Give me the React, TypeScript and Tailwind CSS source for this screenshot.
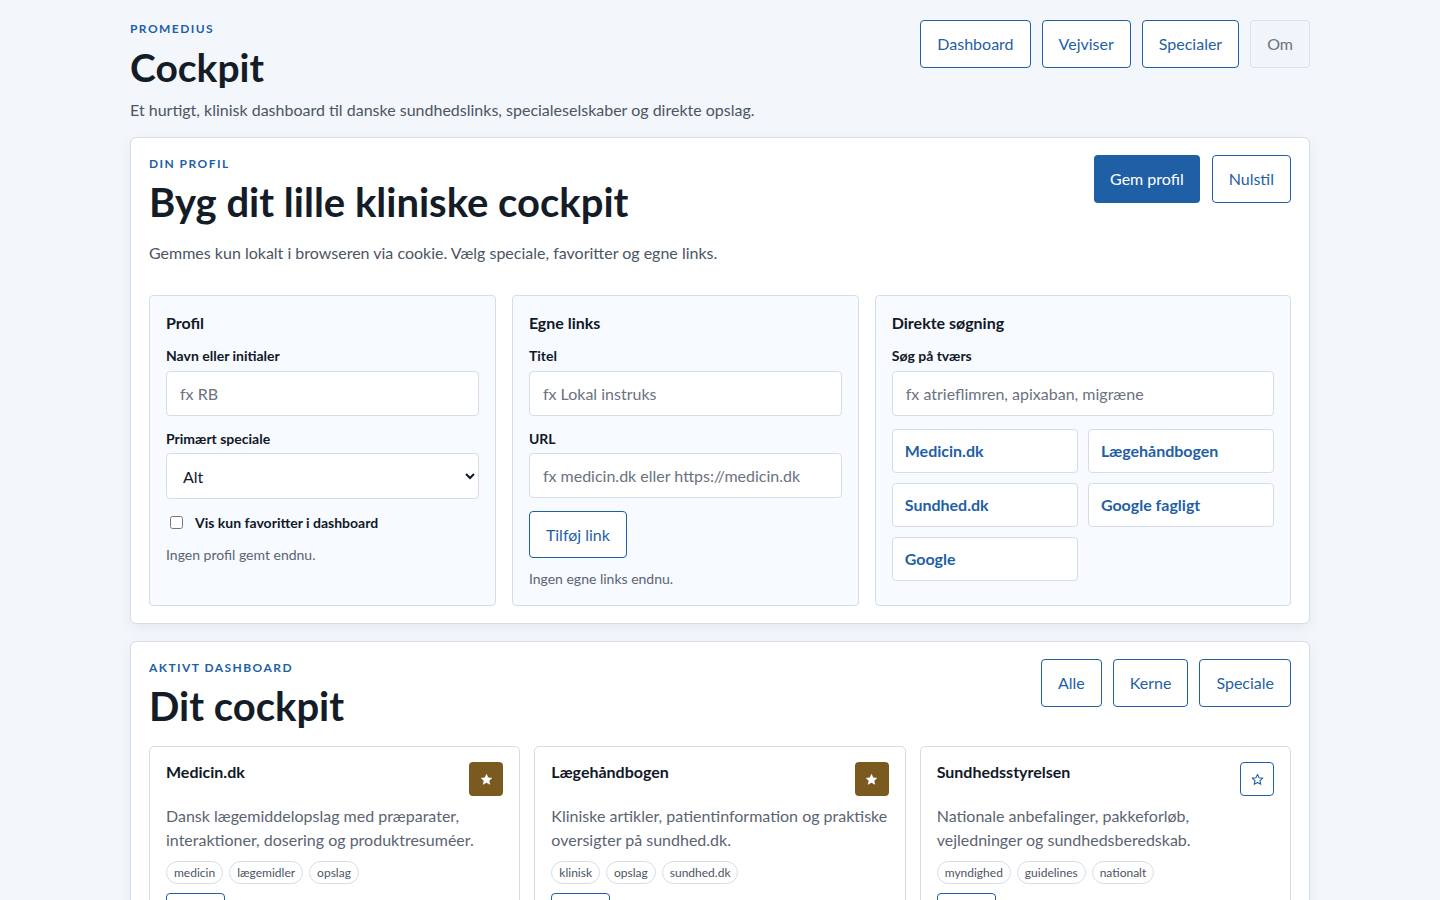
import React from "react";

const font = { fontFamily: "Lato, 'Noto Sans', sans-serif" };

function NavBtn({ children, muted }: { children: React.ReactNode; muted?: boolean }) {
  return (
    <button
      className={
        muted
          ? "h-12 px-4 rounded-[4px] border border-[#dce3ec] bg-[#f1f4f8] text-[#6b7280] text-base"
          : "h-12 px-4 rounded-[4px] border border-[#1f5fa6] bg-white text-[#1f5fa6] text-base"
      }
    >
      {children}
    </button>
  );
}

function Eyebrow({ children }: { children: React.ReactNode }) {
  return (
    <div className="text-[12px] font-bold tracking-[0.12em] uppercase text-[#1f5fa6] leading-4">{children}</div>
  );
}

function Label({ children }: { children: React.ReactNode }) {
  return <div className="text-[14px] font-bold text-[#111827] leading-5">{children}</div>;
}

function Input({ placeholder }: { placeholder: string }) {
  return (
    <input
      placeholder={placeholder}
      className="w-full h-[45px] px-[13px] rounded-[4px] border border-[#d5dde8] bg-white text-base text-[#111827] placeholder:text-[#6b7280] outline-none"
    />
  );
}

function StarIcon({ filled }: { filled?: boolean }) {
  return (
    <svg width="13" height="13" viewBox="0 0 24 24" aria-hidden>
      <path
        d="M12 2.5l2.9 6.3 6.9.7-5.2 4.6 1.5 6.8L12 17.4l-6.1 3.5 1.5-6.8L2.2 9.5l6.9-.7z"
        fill={filled ? "#ffffff" : "none"}
        stroke={filled ? "#ffffff" : "#1f5fa6"}
        strokeWidth={filled ? 1 : 2}
        strokeLinejoin="round"
      />
    </svg>
  );
}

function LinkCard({
  title,
  desc,
  tags,
  fav,
}: {
  title: string;
  desc: string;
  tags: string[];
  fav?: boolean;
}) {
  return (
    <div className="rounded-[5px] border border-[#d5dde8] bg-white px-4 pt-[15px] pb-6">
      <div className="flex items-start justify-between">
        <div className="text-base font-bold text-[#111827] leading-5">{title}</div>
        <button
          className={
            fav
              ? "w-[34px] h-[34px] rounded-[4px] bg-[#7a5a1f] flex items-center justify-center"
              : "w-[34px] h-[34px] rounded-[4px] border border-[#1f5fa6] bg-white flex items-center justify-center"
          }
        >
          <StarIcon filled={fav} />
        </button>
      </div>
      <p className="mt-[8px] text-base leading-6 text-[#5b6472]">{desc}</p>
      <div className="mt-[9px] flex gap-[6px]">
        {tags.map((t) => (
          <span
            key={t}
            className="h-[23px] px-[7px] rounded-full border border-[#d5dde8] text-[12px] leading-[21px] text-[#4b5563]"
          >
            {t}
          </span>
        ))}
      </div>
      <div className="mt-[9px] flex">
        <button className="h-[40px] px-4 rounded-[4px] border border-[#1f5fa6] text-[#1f5fa6] text-sm">Åbn</button>
      </div>
    </div>
  );
}

export default function App() {
  return (
    <div className="min-h-[900px] bg-[#f3f6fa] text-[#111827]" style={font}>
      <div className="max-w-[1180px] mx-auto">
        <header className="flex justify-between items-start pt-[20px]">
          <div>
            <div className="pt-[1px]">
              <Eyebrow>Promedius</Eyebrow>
            </div>
            <h1 className="mt-[6px] text-[39px] leading-[48px] font-bold text-[#141c28]">Cockpit</h1>
            <p className="mt-[7px] text-base leading-6 text-[#4b5563]">
              Et hurtigt, klinisk dashboard til danske sundhedslinks, specialeselskaber og direkte opslag.
            </p>
          </div>
          <nav className="flex gap-[11px]">
            <NavBtn>Dashboard</NavBtn>
            <NavBtn>Vejviser</NavBtn>
            <NavBtn>Specialer</NavBtn>
            <NavBtn muted>Om</NavBtn>
          </nav>
        </header>

        <section className="mt-[15px] rounded-[6px] border border-[#d5dde8] bg-white shadow-[0_4px_14px_rgba(20,40,80,0.06)] px-[18px] pt-[17px] pb-[17px]">
          <div className="flex justify-between items-start">
            <div>
              <div className="pt-[1px]">
                <Eyebrow>Din profil</Eyebrow>
              </div>
              <h2 className="mt-[6px] text-[40px] leading-[48px] font-bold text-[#141c28]">
                Byg dit lille kliniske cockpit
              </h2>
              <p className="mt-[15px] text-base leading-6 text-[#4b5563]">
                Gemmes kun lokalt i browseren via cookie. Vælg speciale, favoritter og egne links.
              </p>
            </div>
            <div className="flex gap-3">
              <button className="h-12 px-4 rounded-[4px] bg-[#1f5fa6] text-white text-base">Gem profil</button>
              <button className="h-12 px-4 rounded-[4px] border border-[#1f5fa6] bg-white text-[#1f5fa6] text-base">
                Nulstil
              </button>
            </div>
          </div>

          <div className="mt-[30px] grid grid-cols-[1fr_1fr_1.2fr] gap-4">
            <div className="rounded-[4px] border border-[#d5dde8] bg-[#f7faff] px-4 pt-[15px] pb-[20px]">
              <div className="text-base font-bold leading-6">Profil</div>
              <div className="mt-[11px]">
                <Label>Navn eller initialer</Label>
              </div>
              <div className="mt-[5px]">
                <Input placeholder="fx RB" />
              </div>
              <div className="mt-[13px]">
                <Label>Primært speciale</Label>
              </div>
              <select className="mt-[4px] w-full h-[46px] px-[12px] rounded-[4px] border border-[#d5dde8] bg-white text-base text-[#111827]">
                <option>Alt</option>
              </select>
              <label className="mt-[13px] flex items-center gap-[12px] pl-[4px] text-[14px] font-bold">
                <input type="checkbox" className="w-[13px] h-[13px]" />
                Vis kun favoritter i dashboard
              </label>
              <div className="mt-[11px] text-[14px] text-[#5b6472]">Ingen profil gemt endnu.</div>
            </div>

            <div className="rounded-[4px] border border-[#d5dde8] bg-[#f7faff] px-4 pt-[15px] pb-[16px]">
              <div className="text-base font-bold leading-6">Egne links</div>
              <div className="mt-[11px]">
                <Label>Titel</Label>
              </div>
              <div className="mt-[5px]">
                <Input placeholder="fx Lokal instruks" />
              </div>
              <div className="mt-[13px]">
                <Label>URL</Label>
              </div>
              <div className="mt-[4px]">
                <Input placeholder="fx medicin.dk eller https://medicin.dk" />
              </div>
              <button className="mt-[13px] h-[47px] px-4 rounded-[4px] border border-[#1f5fa6] bg-white text-[#1f5fa6] text-base">
                Tilføj link
              </button>
              <div className="mt-[10px] text-[14px] text-[#5b6472]">Ingen egne links endnu.</div>
            </div>

            <div className="rounded-[4px] border border-[#d5dde8] bg-[#f7faff] px-4 pt-[15px] pb-[23px]">
              <div className="text-base font-bold leading-6">Direkte søgning</div>
              <div className="mt-[11px]">
                <Label>Søg på tværs</Label>
              </div>
              <div className="mt-[5px]">
                <Input placeholder="fx atrieflimren, apixaban, migræne" />
              </div>
              <div className="mt-[13px] grid grid-cols-2 gap-[10px]">
                {["Medicin.dk", "Lægehåndbogen", "Sundhed.dk", "Google fagligt", "Google"].map((s) => (
                  <button
                    key={s}
                    className="h-[44px] px-[12px] text-left rounded-[4px] border border-[#d5dde8] bg-white text-base font-bold text-[#1f5fa6]"
                  >
                    {s}
                  </button>
                ))}
              </div>
            </div>
          </div>
        </section>

        <section className="mt-[17px] rounded-[6px] border border-[#d5dde8] bg-white shadow-[0_4px_14px_rgba(20,40,80,0.06)] px-[18px] pt-[17px] pb-[20px]">
          <div className="flex justify-between items-start">
            <div>
              <div className="pt-[1px]">
                <Eyebrow>Aktivt dashboard</Eyebrow>
              </div>
              <h2 className="mt-[6px] text-[40px] leading-[48px] font-bold text-[#141c28]">Dit cockpit</h2>
            </div>
            <div className="flex gap-[11px]">
              <NavBtn>Alle</NavBtn>
              <NavBtn>Kerne</NavBtn>
              <NavBtn>Speciale</NavBtn>
            </div>
          </div>
          <div className="mt-[16px] grid grid-cols-3 gap-[14px]">
            <LinkCard
              title="Medicin.dk"
              desc="Dansk lægemiddelopslag med præparater, interaktioner, dosering og produktresuméer."
              tags={["medicin", "lægemidler", "opslag"]}
              fav
            />
            <LinkCard
              title="Lægehåndbogen"
              desc="Kliniske artikler, patientinformation og praktiske oversigter på sundhed.dk."
              tags={["klinisk", "opslag", "sundhed.dk"]}
              fav
            />
            <LinkCard
              title="Sundhedsstyrelsen"
              desc="Nationale anbefalinger, pakkeforløb, vejledninger og sundhedsberedskab."
              tags={["myndighed", "guidelines", "nationalt"]}
            />
          </div>
        </section>
      </div>
    </div>
  );
}
